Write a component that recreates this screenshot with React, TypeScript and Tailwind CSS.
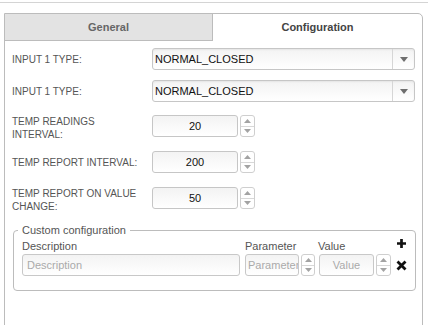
import React from "react";

const font = { fontFamily: '"Liberation Sans", Arial, sans-serif' };

function Select({ value }: { value: string }) {
  return (
    <div className="flex h-[22px] w-[263px] overflow-hidden rounded-[3px] border border-[#c6c6c6] bg-gradient-to-b from-[#f3f3f3] to-white shadow-[inset_0_1px_2px_rgba(0,0,0,0.06)]">
      <div className="flex flex-1 items-center pl-[2px] text-[11px] text-[#111]">{value}</div>
      <div className="flex w-[22px] items-center justify-center border-l border-[#d6d6d6]">
        <svg width="8" height="5" viewBox="0 0 8 5">
          <path d="M0 0h8L4 5z" fill="#6e6e6e" />
        </svg>
      </div>
    </div>
  );
}

function Spinner({ w = 15 }: { w?: number }) {
  return (
    <div
      className="ml-[2px] flex h-[22px] flex-col rounded-[3px] border border-[#cfcfcf] bg-white"
      style={{ width: w }}
    >
      <div className="flex flex-1 items-center justify-center border-b border-[#d8d8d8]">
        <svg width="7" height="4" viewBox="0 0 7 4">
          <path d="M0 4h7L3.5 0z" fill="#a3a3a3" />
        </svg>
      </div>
      <div className="flex flex-1 items-center justify-center">
        <svg width="7" height="4" viewBox="0 0 7 4">
          <path d="M0 0h7L3.5 4z" fill="#a3a3a3" />
        </svg>
      </div>
    </div>
  );
}

function NumberField({ value }: { value: string }) {
  return (
    <div className="flex">
      <div className="flex h-[22px] w-[86px] items-center justify-center rounded-[3px] border border-[#c6c6c6] bg-gradient-to-b from-[#f3f3f3] to-white text-[11px] text-[#111]">
        {value}
      </div>
      <Spinner />
    </div>
  );
}

export default function App() {
  return (
    <div className="h-[325px] w-[428px] overflow-hidden bg-white" style={font}>
      <div className="mt-[2px] border-t border-[#d4d4d4]" />
      <div className="ml-[4px] mt-[10px] h-[330px] w-[419px] rounded-tr-[5px] border border-[#bcbcbc]">
        <div className="flex h-[27px]">
          <div className="flex w-[208px] items-center justify-center border-b border-r border-[#bcbcbc] bg-[#e3e3e3] text-[11px] font-bold text-[#666]">
            General
          </div>
          <div className="flex flex-1 items-center justify-center text-[11px] font-bold text-[#444]">
            Configuration
          </div>
        </div>

        <div className="pt-[7px] text-[10px] text-[#555]">
          <div className="flex h-[22px] items-center pl-[7px]">
            <div className="w-[140px]">INPUT 1 TYPE:</div>
            <Select value="NORMAL_CLOSED" />
          </div>
          <div className="mt-[10px] flex h-[22px] items-center pl-[7px]">
            <div className="w-[140px]">INPUT 1 TYPE:</div>
            <Select value="NORMAL_CLOSED" />
          </div>
          <div className="mt-[13px] flex h-[22px] items-center pl-[7px]">
            <div className="mt-[4px] w-[140px] leading-[13px]">
              TEMP READINGS
              <br />
              INTERVAL:
            </div>
            <NumberField value="20" />
          </div>
          <div className="mt-[14px] flex h-[22px] items-center pl-[7px]">
            <div className="w-[140px]">TEMP REPORT INTERVAL:</div>
            <NumberField value="200" />
          </div>
          <div className="mt-[14px] flex h-[22px] items-center pl-[7px]">
            <div className="mt-[4px] w-[140px] leading-[13px]">
              TEMP REPORT ON VALUE
              <br />
              CHANGE:
            </div>
            <NumberField value="50" />
          </div>

          <fieldset className="ml-[8px] mr-[7px] mt-[15px] rounded-[4px] border border-[#bcbcbc] px-[8px] pb-[14px] pt-[2px] text-[11px] text-[#555]">
            <legend className="ml-[-4px] px-[4px] leading-[13px]">Custom configuration</legend>
            <div className="flex items-end">
              <div className="w-[223px] leading-[14px]">Description</div>
              <div className="w-[73px] leading-[14px]">Parameter</div>
              <div className="flex-1 leading-[14px]">Value</div>
              <svg width="9" height="9" viewBox="0 0 10 10" className="mb-[5px] mr-[1px]">
                <path d="M3.5 0h3v3.5H10v3H6.5V10h-3V6.5H0v-3h3.5z" fill="#111" />
              </svg>
            </div>
            <div className="mt-[1px] flex items-center">
              <div className="flex h-[22px] w-[218px] items-center rounded-[3px] border border-[#c8c8c8] bg-gradient-to-b from-[#f3f3f3] to-white pl-[4px] text-[#aaa]">
                Description
              </div>
              <div className="ml-[5px] flex">
                <div className="flex h-[22px] w-[54px] items-center overflow-hidden rounded-[3px] border border-[#c8c8c8] bg-gradient-to-b from-[#f3f3f3] to-white pl-[2px] whitespace-nowrap text-[#aaa]">
                  Parameter
                </div>
                <Spinner w={14} />
              </div>
              <div className="ml-[4px] flex">
                <div className="flex h-[22px] w-[55px] items-center justify-center rounded-[3px] border border-[#c8c8c8] bg-gradient-to-b from-[#f3f3f3] to-white text-[#aaa]">
                  Value
                </div>
                <Spinner w={15} />
              </div>
              <svg width="11" height="11" viewBox="0 0 11 11" className="ml-[5px]">
                <path d="M1.5 1.5l8 8M9.5 1.5l-8 8" stroke="#111" strokeWidth="2.8" />
              </svg>
            </div>
          </fieldset>
        </div>
      </div>
    </div>
  );
}
